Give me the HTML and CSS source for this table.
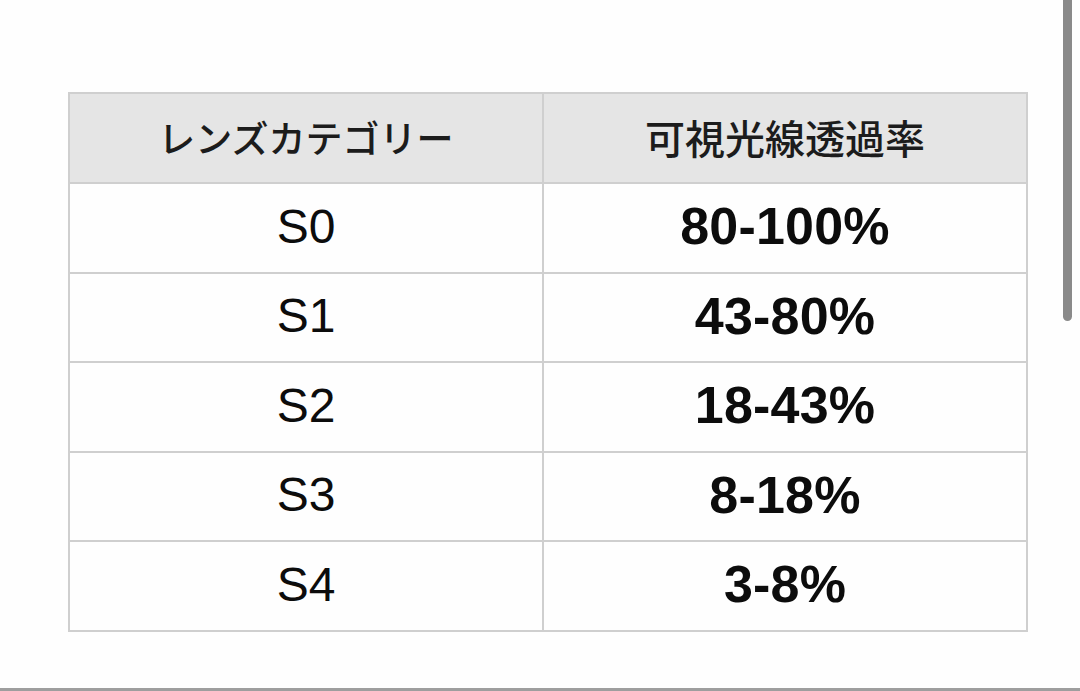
FILE: index.html
```html
<!DOCTYPE html>
<html lang="ja">
<head>
<meta charset="utf-8">
<title>レンズカテゴリー</title>
<link rel="stylesheet" href="styles.css">
</head>
<body>
<div class="page">
  <table class="lens">
    <colgroup>
      <col class="c1">
      <col class="c2">
    </colgroup>
    <thead>
      <tr><th>レンズカテゴリー</th><th class="wide">可視光線透過率</th></tr>
    </thead>
    <tbody>
      <tr><td>S0</td><td class="val">80-100%</td></tr>
      <tr><td>S1</td><td class="val">43-80%</td></tr>
      <tr><td>S2</td><td class="val">18-43%</td></tr>
      <tr><td>S3</td><td class="val">8-18%</td></tr>
      <tr><td>S4</td><td class="val">3-8%</td></tr>
    </tbody>
  </table>
  <div class="bottom-line"></div>
</div>
<div class="scrollbar"></div>
</body>
</html>
```
FILE: styles.css
```css
html, body {
  margin: 0;
  padding: 0;
  background: #fefefe;
}
.page {
  height: 691px;
  display: flex;
  flex-direction: column;
  align-items: flex-start;
  padding: 92px 0 0 68px;
  box-sizing: border-box;
}
.lens {
  border-collapse: collapse;
  table-layout: fixed;
  width: 958px;
  border: 2px solid #cbcbcb;
}
.c1 { width: 474px; }
.c2 { width: 484px; }
.lens th, .lens td {
  border: 2px solid #cfcfcf;
  text-align: center;
  vertical-align: middle;
  padding: 0;
}
.lens th {
  height: 86px;
  background: #e5e5e5;
  font-family: "Noto Sans CJK JP", sans-serif;
  font-weight: 500;
  font-size: 37px;
  color: #1c1c1c;
  padding-bottom: 2px;
}
.lens th.wide {
  font-size: 40px;
}
.lens td {
  height: 84.5px;
  background: #fefefe;
  font-family: "Liberation Sans", Arial, sans-serif;
  font-size: 48px;
  color: #0c0c0c;
  padding-bottom: 3px;
}
.lens td.val {
  font-weight: 700;
  font-size: 52px;
  letter-spacing: 0.2px;
}
.bottom-line {
  margin-top: auto;
  margin-left: -68px;
  width: 1080px;
  height: 3px;
  background: #9e9e9e;
}
.scrollbar {
  position: absolute;
  top: 0;
  left: 1063px;
  width: 9px;
  height: 321px;
  background: #8a8a8a;
  border-radius: 0 0 5px 5px;
}
```
